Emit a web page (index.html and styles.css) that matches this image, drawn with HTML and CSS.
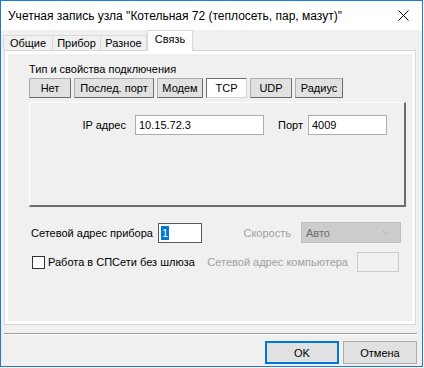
FILE: index.html
```html
<!DOCTYPE html>
<html lang="ru">
<head>
    <meta charset="UTF-8">
    <title>Учетная запись узла</title>
    <link rel="stylesheet" href="styles.css">
</head>
<body>
    <div class="window">
        <div class="titlebar">
            <span class="title">Учетная запись узла "Котельная 72 (теплосеть, пар, мазут)"</span>
            <svg class="close" width="11" height="11" viewBox="0 0 11 11">
                <path d="M0.5 0.5 L10.5 10.5 M10.5 0.5 L0.5 10.5" stroke="#000" stroke-width="1" fill="none"/>
            </svg>
        </div>

        <div class="tabs">
            <div class="tab tab-common">Общие</div>
            <div class="tab tab-device">Прибор</div>
            <div class="tab tab-misc">Разное</div>
            <div class="tab active">Связь</div>
        </div>

        <div class="panel">
            <div class="page">
                <div class="group-title">Тип и свойства подключения</div>

                <div class="modes">
                    <div class="mode mode-none">Нет</div>
                    <div class="mode mode-serial">Послед. порт</div>
                    <div class="mode mode-modem">Модем</div>
                    <div class="mode mode-tcp pressed">TCP</div>
                    <div class="mode mode-udp">UDP</div>
                    <div class="mode mode-radius">Радиус</div>
                </div>

                <div class="frame">
                    <div class="frame-row">
                        <span class="lbl ip-lbl">IP адрес</span>
                        <div class="field ip-field">10.15.72.3</div>
                        <span class="lbl port-lbl">Порт</span>
                        <div class="field port-field">4009</div>
                    </div>
                </div>

                <div class="row row-addr">
                    <span class="lbl addr-lbl">Сетевой адрес прибора</span>
                    <div class="field addr-field focused"><span class="sel">1</span></div>
                    <span class="lbl speed-lbl disabled">Скорость</span>
                    <div class="select disabled-select">
                        <span>Авто</span>
                        <svg width="9" height="5" viewBox="0 0 9 5">
                            <path d="M0.5 0.5 L4.5 4.5 L8.5 0.5" stroke="#b4b4b4" fill="none"/>
                        </svg>
                    </div>
                </div>

                <div class="row row-gw">
                    <span class="checkbox"></span>
                    <span class="lbl gw-lbl">Работа в СПСети без шлюза</span>
                    <span class="lbl pc-lbl disabled">Сетевой адрес компьютера</span>
                    <div class="field pc-field"></div>
                </div>
            </div>
        </div>

        <div class="footer">
            <div class="sep"></div>
            <div class="actions">
                <div class="btn default">OK</div>
                <div class="btn">Отмена</div>
            </div>
        </div>
    </div>
</body>
</html>
```

FILE: styles.css
```css
:root {
    --win-bg: #f0f0f0;
    --win-border: #1c7ad4;
    --tab-border: #d9d9d9;
    --btn-bg: #e1e1e1;
    --btn-border: #adadad;
    --text: #000000;
    --text-disabled: #a0a0a0;
    --accent: #0078d7;
}

* {
    margin: 0;
    padding: 0;
    box-sizing: border-box;
}

body {
    font-family: 'Liberation Sans', Arial, sans-serif;
    font-size: 11px;
    color: var(--text);
    background: #ffffff;
}

.window {
    width: 423px;
    height: 367px;
    border: 1px solid var(--win-border);
    background: var(--win-bg);
    display: flex;
    flex-direction: column;
}

/* Title bar */
.titlebar {
    height: 29px;
    flex: none;
    background: #ffffff;
    display: flex;
    align-items: center;
    justify-content: space-between;
    padding: 0 13px 0 7px;
}

.title {
    font-size: 12px;
}

/* Tabs */
.tabs {
    height: 20px;
    flex: none;
    display: flex;
    align-items: flex-end;
    padding-left: 2px;
    position: relative;
    z-index: 1;
}

.tab {
    height: 15px;
    line-height: 14px;
    border: 1px solid var(--tab-border);
    border-bottom: none;
    text-align: center;
}

.tab + .tab {
    border-left: none;
}

.tab-common { width: 50px; }
.tab-device { width: 48px; }
.tab-misc { width: 46px; }

.tab.active {
    width: 46px;
    height: 21px;
    line-height: 16px;
    margin-bottom: -1px;
    background: #ffffff;
    border-left: 1px solid var(--tab-border);
}

/* Tab page */
.panel {
    height: 275px;
    flex: none;
    margin: 0 6px 0 3px;
    border: 1px solid var(--tab-border);
    background: #ffffff;
    padding: 3px;
}

.page {
    height: 100%;
    background: var(--win-bg);
    padding: 9px 0 0 21px;
}

.group-title {
    line-height: 13px;
}

.modes {
    display: flex;
    gap: 3px;
    height: 20px;
    margin-top: 2px;
}

.mode {
    background: var(--btn-bg);
    border: 1px solid var(--btn-border);
    border-right-color: #6d6d6d;
    border-bottom-color: #6d6d6d;
    display: flex;
    align-items: center;
    justify-content: center;
}

.mode.pressed {
    background: #ffffff;
    border-color: #6d6d6d #d4d4d4 #d4d4d4 #6d6d6d;
}

.mode-none { width: 42px; }
.mode-serial { width: 80px; }
.mode-modem { width: 46px; }
.mode-tcp { width: 41px; }
.mode-udp { width: 42px; }
.mode-radius { width: 48px; }

.frame {
    width: 377px;
    height: 105px;
    margin-top: 4px;
    border-style: solid;
    border-width: 1px 2px 2px 1px;
    border-color: #ffffff #6d6d6d #6d6d6d #ffffff;
    padding-top: 12px;
}

.frame-row,
.row {
    display: flex;
    align-items: center;
}

.lbl {
    white-space: nowrap;
}

.ip-lbl {
    width: 96px;
    text-align: right;
    margin-right: 9px;
}

.field {
    height: 20px;
    background: #ffffff;
    border: 1px solid #abadb3;
    padding-left: 3px;
    display: flex;
    align-items: center;
}

.ip-field { width: 129px; }

.port-lbl {
    width: 25px;
    margin: 0 5px 0 14px;
}

.port-field { width: 79px; }

/* Bottom rows */
.row-addr {
    height: 21px;
    margin-top: 15px;
    padding-left: 2px;
}

.addr-lbl { width: 127px; }

.addr-field {
    width: 44px;
    border-color: #5a5a5a;
    padding-left: 2px;
}

.sel {
    background: var(--accent);
    color: #ffffff;
    line-height: 14px;
    padding: 0 1px;
}

.disabled {
    color: var(--text-disabled);
}

.speed-lbl {
    width: 89px;
    text-align: right;
    margin-right: 10px;
}

.select {
    width: 100px;
    height: 21px;
    display: flex;
    align-items: center;
    justify-content: space-between;
    padding: 0 9px 0 4px;
}

.disabled-select {
    background: #cccccc;
    border: 1px solid #bfbfbf;
    color: #6d6d6d;
}

.row-gw {
    height: 20px;
    margin-top: 9px;
    padding-left: 3px;
}

.checkbox {
    width: 13px;
    height: 13px;
    background: #ffffff;
    border: 1px solid #333333;
    margin-right: 3px;
}

.gw-lbl { width: 152px; }

.pc-lbl {
    width: 148px;
    text-align: right;
    margin-right: 9px;
}

.pc-field {
    width: 42px;
    background: var(--win-bg);
    border-color: #cccccc;
}

/* Footer */
.footer {
    padding-top: 8px;
}

.sep {
    margin: 0 5px 0 3px;
    border-top: 1px solid #a0a0a0;
    border-bottom: 1px solid #ffffff;
}

.actions {
    display: flex;
    justify-content: flex-end;
    gap: 4px;
    margin-top: 6px;
    padding-right: 5px;
}

.btn {
    width: 74px;
    height: 23px;
    background: var(--btn-bg);
    border: 1px solid var(--btn-border);
    display: flex;
    align-items: center;
    justify-content: center;
}

.btn.default {
    border: 2px solid var(--accent);
}
```
